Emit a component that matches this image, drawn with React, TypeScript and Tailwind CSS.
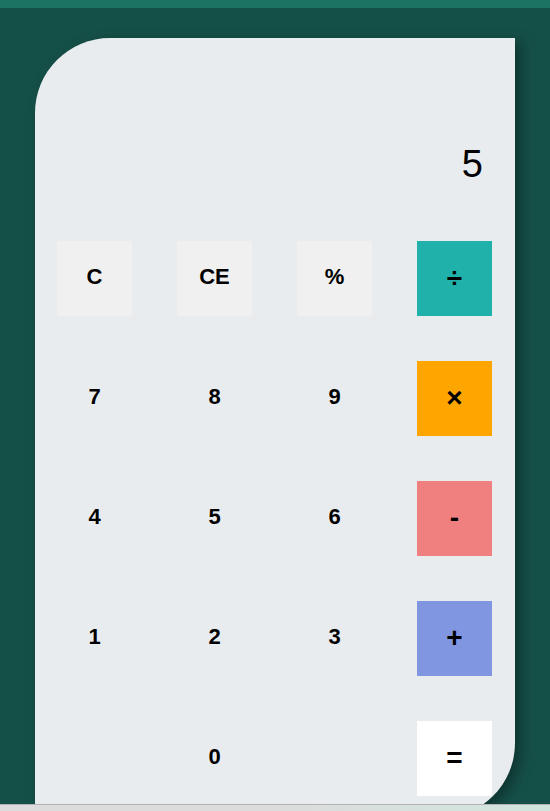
import React, { useState } from 'react';

const keys: { label: string; kind: 'fn' | 'num' | 'op' | 'empty'; color?: string }[] = [
  { label: 'C', kind: 'fn' },
  { label: 'CE', kind: 'fn' },
  { label: '%', kind: 'fn' },
  { label: '÷', kind: 'op', color: 'bg-[#20b2aa]' },
  { label: '7', kind: 'num' },
  { label: '8', kind: 'num' },
  { label: '9', kind: 'num' },
  { label: '×', kind: 'op', color: 'bg-[#ffa500]' },
  { label: '4', kind: 'num' },
  { label: '5', kind: 'num' },
  { label: '6', kind: 'num' },
  { label: '-', kind: 'op', color: 'bg-[#f08080]' },
  { label: '1', kind: 'num' },
  { label: '2', kind: 'num' },
  { label: '3', kind: 'num' },
  { label: '+', kind: 'op', color: 'bg-[#8096e0]' },
  { label: '', kind: 'empty' },
  { label: '0', kind: 'num' },
  { label: '', kind: 'empty' },
  { label: '=', kind: 'op', color: 'bg-white' },
];

const App: React.FC = () => {
  const [display, setDisplay] = useState('5');

  const press = (label: string) => {
    if (label === 'C' || label === 'CE') setDisplay('0');
    else if (/\d/.test(label)) setDisplay(display === '0' ? label : display + label);
  };

  return (
    <div className="h-[811px] w-[550px] flex flex-col overflow-hidden font-['Liberation_Sans',Arial,sans-serif] text-black">
      <div className="h-[8px] bg-[#1d7363] shrink-0"></div>
      <div className="flex-1 bg-[#155048] pl-[35px] pt-[30px] overflow-hidden">
        <div className="w-[480px] bg-[#e9ecef] rounded-tl-[75px] rounded-br-[75px] pt-[107px] pl-[22px] pr-[23px] pb-[22px] shadow-[6px_4px_14px_rgba(0,0,0,0.35)]">
          <div className="text-right text-[38px] leading-none pr-[9px] mb-[58px]">{display}</div>
          <div className="grid grid-cols-[repeat(4,75px)] auto-rows-[75px] gap-[45px]">
            {keys.map((k, i) =>
              k.kind === 'empty' ? (
                <div key={i}></div>
              ) : (
                <button
                  key={i}
                  onClick={() => press(k.label)}
                  className={`flex items-center justify-center font-bold leading-none ${
                    k.kind === 'op' ? `text-[28px] pb-[2px] ${k.color}` : 'text-[22px] pb-[3px]'
                  } ${k.kind === 'fn' ? 'bg-[#f0f0f0]' : ''}`}
                >
                  {k.label}
                </button>
              )
            )}
          </div>
        </div>
      </div>
      <div className="shrink-0 h-[7px] border-t border-[#b3b3b3] bg-gradient-to-r from-[#dcdcdc] via-[#dcdcdc] to-[#d0e6dd]"></div>
    </div>
  );
};

export default App;
